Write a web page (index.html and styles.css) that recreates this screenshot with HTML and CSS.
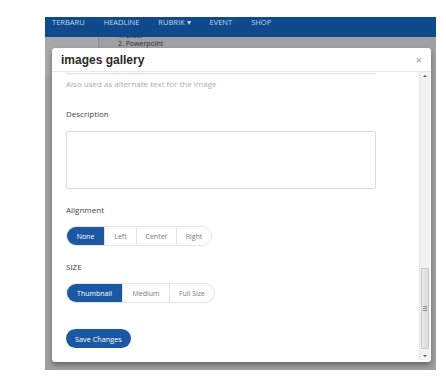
FILE: index.html
```html
<!DOCTYPE html>
<html lang="en">
<head>
    <meta charset="UTF-8">
    <meta name="viewport" content="width=device-width, initial-scale=1.0">
    <title>images gallery</title>
    <link rel="stylesheet" href="styles.css">
</head>
<body>

<div class="frame">
    <nav class="topnav">
        <a>Terbaru</a>
        <a>Headline</a>
        <a>Rubrik &#9662;</a>
        <a>Event</a>
        <a>Shop</a>
    </nav>

    <div class="under">
        <div class="sidebar"></div>
        <div class="article">
            <div>1. Excel</div>
            <div>2. Powerpoint</div>
        </div>
    </div>

    <div class="modal">
        <div class="modal-head">
            <h2>images gallery</h2>
            <span class="close">&times;</span>
        </div>
        <div class="modal-body">
            <div class="scroll-content">
                <div class="cut-input"></div>
                <p class="hint">Also used as alternate text for the image</p>

                <label class="field-label first">Description</label>
                <div class="textarea"></div>

                <label class="field-label">Alignment</label>
                <div class="btn-group">
                    <span class="active w-none">None</span>
                    <span class="w-left">Left</span>
                    <span class="w-center">Center</span>
                    <span class="w-right">Right</span>
                </div>

                <label class="field-label">SIZE</label>
                <div class="btn-group">
                    <span class="active w-thumb">Thumbnail</span>
                    <span class="w-medium">Medium</span>
                    <span class="w-full">Full Size</span>
                </div>

                <button class="save">Save Changes</button>
            </div>
            <div class="scrollbar">
                <span class="arrow up"></span>
                <div class="track">
                    <div class="thumb"><i></i><i></i><i></i></div>
                </div>
                <span class="arrow down"></span>
            </div>
        </div>
    </div>
</div>

</body>
</html>
```

FILE: styles.css
```css
body {
    margin: 0;
    background-color: #fff;
    font-family: "Open Sans", Arial, sans-serif;
}

.frame {
    position: relative;
    margin: 17px 0 0 45px;
    width: 391px;
    height: 353px;
    background-color: #a0a0a0;
    overflow: hidden;
}

.topnav {
    display: flex;
    gap: 19px;
    height: 20px;
    padding-left: 7px;
    background-color: #0f4a8c;
    box-sizing: border-box;
}

.topnav a {
    font-size: 7.5px;
    line-height: 10px;
    text-transform: uppercase;
    color: #c6d4ea;
}

.under {
    display: flex;
    height: 40px;
    overflow: hidden;
}

.sidebar {
    width: 53px;
    background-color: #a8a8a8;
    border-right: 1px solid #8c8c8c;
}

.article {
    padding-left: 19px;
    margin-top: -5px;
    font-size: 7px;
    line-height: 8px;
    color: #2b2b2b;
}

.modal {
    position: absolute;
    left: 7px;
    top: 31px;
    width: 379px;
    height: 314px;
    background-color: #fff;
    border-radius: 3px;
    box-shadow: 0 3px 5px rgba(0, 0, 0, 0.35);
    display: flex;
    flex-direction: column;
}

.modal-head {
    display: flex;
    align-items: center;
    justify-content: space-between;
    height: 24px;
    padding: 0 9px;
    border-bottom: 1px solid #e6e6e6;
    box-sizing: border-box;
}

.modal-head h2 {
    margin: 0;
    font-family: "Liberation Sans", Arial, sans-serif;
    font-size: 12px;
    font-weight: bold;
    color: #2a2a2a;
}

.close {
    font-family: "Liberation Sans", Arial, sans-serif;
    font-size: 11px;
    color: #999;
}

.modal-body {
    display: flex;
    flex: 1;
    min-height: 0;
}

.scroll-content {
    flex: 1;
    padding-left: 14px;
}

.cut-input {
    width: 310px;
    height: 1px;
    border-bottom: 1px solid #e2e2e2;
    box-shadow: 0 1px 1px rgba(0, 0, 0, 0.04);
}

.hint {
    margin: 4px 0 0;
    font-size: 8px;
    line-height: 12px;
    color: #adadad;
}

.field-label {
    display: block;
    margin-top: 15px;
    font-size: 8px;
    line-height: 12px;
    color: #444;
}

.field-label.first {
    margin-top: 18px;
}

.textarea {
    margin-top: 11px;
    width: 310px;
    height: 58px;
    border: 1px solid #d9d9d9;
    border-radius: 2px;
    box-sizing: border-box;
}

.btn-group {
    display: inline-flex;
    margin-top: 10px;
    height: 20px;
    border: 1px solid #e4e4e4;
    border-radius: 10px;
    overflow: hidden;
    box-sizing: border-box;
    vertical-align: top;
}

.btn-group span {
    display: flex;
    align-items: center;
    justify-content: center;
    box-sizing: border-box;
    font-size: 7px;
    color: #7a7a7a;
    border-left: 1px solid #e4e4e4;
}

.btn-group span:first-child {
    border-left: none;
}

.btn-group span.active {
    background-color: #1b58a3;
    color: #fff;
}

.w-none { width: 37px; }
.w-left { width: 32px; }
.w-center { width: 40px; }
.w-right { width: 35px; }
.w-thumb { width: 55px; }
.w-medium { width: 47px; }
.w-full { width: 45px; }

.save {
    display: block;
    margin-top: 26px;
    height: 19px;
    padding: 0 9px;
    border: none;
    border-radius: 10px;
    background-color: #1b58a3;
    color: #fff;
    font-family: "Open Sans", Arial, sans-serif;
    font-size: 7.3px;
}

.scrollbar {
    display: flex;
    flex-direction: column;
    width: 10px;
    margin: 0 1px 2px 0;
    background-color: #f1f1f1;
    border-left: 1px solid #e6e6e6;
}

.arrow {
    height: 8px;
    display: flex;
    align-items: center;
    justify-content: center;
}

.arrow::before {
    content: "";
    border-left: 2px solid transparent;
    border-right: 2px solid transparent;
}

.arrow.up::before {
    border-bottom: 2px solid #555;
}

.arrow.down::before {
    border-top: 2px solid #555;
}

.track {
    flex: 1;
    display: flex;
    flex-direction: column;
    justify-content: flex-end;
    padding-bottom: 3px;
}

.thumb {
    height: 79px;
    margin: 0 1px;
    background: linear-gradient(to right, #e9e9e9, #dcdcdc);
    border: 1px solid #c9c9c9;
    border-radius: 1px;
    display: flex;
    flex-direction: column;
    align-items: center;
    justify-content: center;
    gap: 1px;
}

.thumb i {
    display: block;
    width: 4px;
    height: 1px;
    background-color: #8a8a8a;
}
```
